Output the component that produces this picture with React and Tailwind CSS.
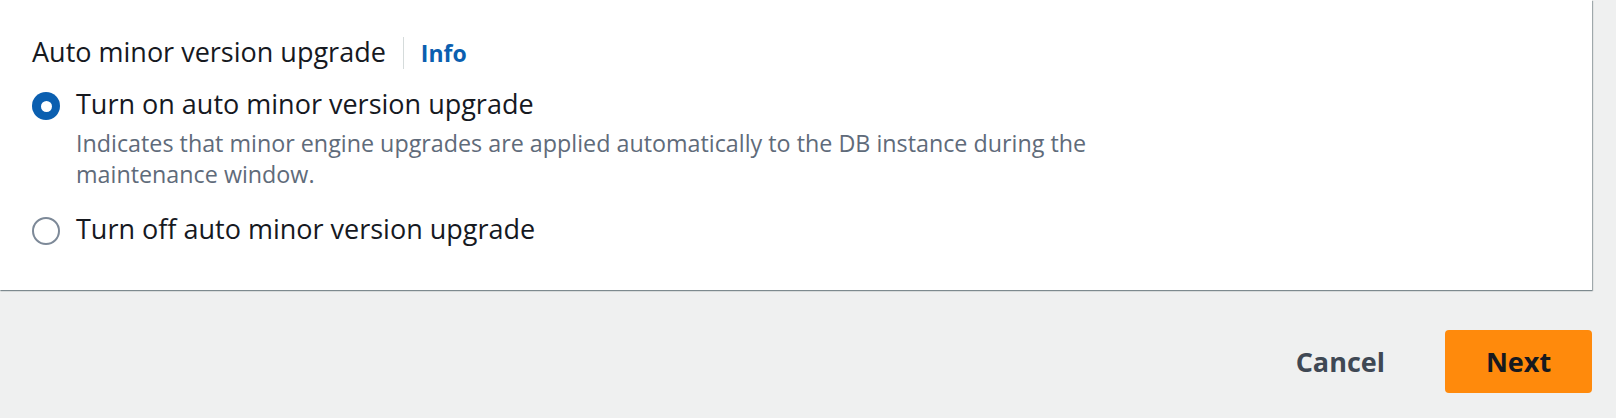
import React from "react";

const font = { fontFamily: '"Open Sans", "Noto Sans", Arial, sans-serif' };

function Radio({ checked }) {
  if (checked) {
    return (
      <span className="mt-[6px] flex h-[28px] w-[28px] shrink-0 items-center justify-center rounded-full bg-[#0b5fb0]">
        <span className="h-[11px] w-[11px] rounded-full bg-white" />
      </span>
    );
  }
  return (
    <span className="mt-[6px] h-[28px] w-[28px] shrink-0 rounded-full border-2 border-[#7d8998] bg-white" />
  );
}

export default function App() {
  return (
    <div
      className="h-[418px] w-[1616px] overflow-hidden bg-[#eff0f0] font-['Open_Sans',sans-serif]"
      style={font}
    >
      <div className="h-[290px] w-[1592px] bg-white pl-[32px] pt-[34px] shadow-[1px_1px_1px_0_rgba(0,28,36,0.3),0_1px_1px_0_rgba(0,28,36,0.25)]">
        <div className="flex items-baseline">
          <span className="text-[27px] leading-[36px] text-[#16191f]">
            Auto minor version upgrade
          </span>
          <span className="ml-[17px] h-[32px] w-px self-center bg-[#d5dbdb]" />
          <a className="ml-[17px] text-[23px] font-bold leading-[36px] text-[#0b5fb0]">
            Info
          </a>
        </div>

        <div className="mt-[15px] flex items-start gap-[16px]">
          <Radio checked />
          <div className="flex flex-col">
            <span className="text-[27px] leading-[36px] text-[#16191f]">
              Turn on auto minor version upgrade
            </span>
            <span className="mt-[6px] text-[23.3px] leading-[31px] text-[#5f6b7a]">
              Indicates that minor engine upgrades are applied automatically to the DB instance during the
              <br />
              maintenance window.
            </span>
          </div>
        </div>

        <div className="mt-[21px] flex items-start gap-[16px]">
          <Radio checked={false} />
          <span className="text-[27px] leading-[36px] text-[#16191f]">
            Turn off auto minor version upgrade
          </span>
        </div>
      </div>

      <div className="mt-[40px] flex w-[1592px] items-center justify-end gap-[18px]">
        <button className="h-[63px] rounded-[4px] px-[42px] text-[27px] font-bold leading-[36px] text-[#3f4854]">
          Cancel
        </button>
        <button className="h-[63px] w-[147px] rounded-[4px] bg-[#ff8a0c] text-[27px] font-bold leading-[36px] text-[#16191f]">
          Next
        </button>
      </div>
    </div>
  );
}
